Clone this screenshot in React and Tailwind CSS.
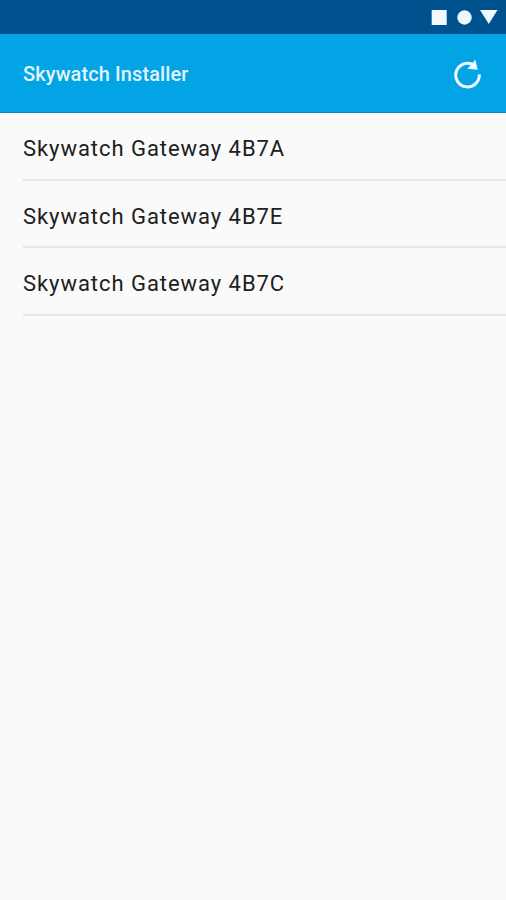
const gateways = ['Skywatch Gateway 4B7A', 'Skywatch Gateway 4B7E', 'Skywatch Gateway 4B7C'];

function StatusBar() {
  return (
    <div className="flex h-[34px] items-center justify-end bg-[#00528f] pr-2">
      <svg width="68" height="34" viewBox="0 0 68 34" fill="#f0f8ff">
        <rect x="1.7" y="10" width="15" height="15" />
        <circle cx="34.5" cy="17.5" r="7.2" />
        <path d="M50 10h17.5l-8.75 14z" />
      </svg>
    </div>
  );
}

function Header() {
  return (
    <header className="flex h-[79px] items-center justify-between border-b border-[#0b86c6] bg-[#03a4e6] pr-[22px] pl-[23px]">
      <h1 className="pt-0.5 text-[20px] font-medium tracking-[0.1px] text-[#e0f4fd]">Skywatch Installer</h1>
      <button aria-label="Refresh">
        {/* open ring with the arrowhead on its upper right end */}
        <svg width="34" height="34" viewBox="0 0 34 34" fill="none">
          <path d="M22.5 8.4A11.8 11.8 0 1 0 29.3 18.3" stroke="#f0faff" strokeWidth="3" />
          <path d="M25.3 3.8l2.4 10-10.2-1z" fill="#f0faff" />
        </svg>
      </button>
    </header>
  );
}

export default function App() {
  return (
    <div className="h-[900px] w-[506px] overflow-hidden bg-[#fafafa] font-['Roboto',sans-serif]">
      <StatusBar />
      <Header />
      <ul className="pl-[23px]">
        {gateways.map((name) => (
          <li key={name} className="flex h-[67.5px] items-center border-b-2 border-[#e6e6e6] pt-1.5 text-[22px] tracking-[0.95px] text-[#202020]">
            {name}
          </li>
        ))}
      </ul>
    </div>
  );
}
